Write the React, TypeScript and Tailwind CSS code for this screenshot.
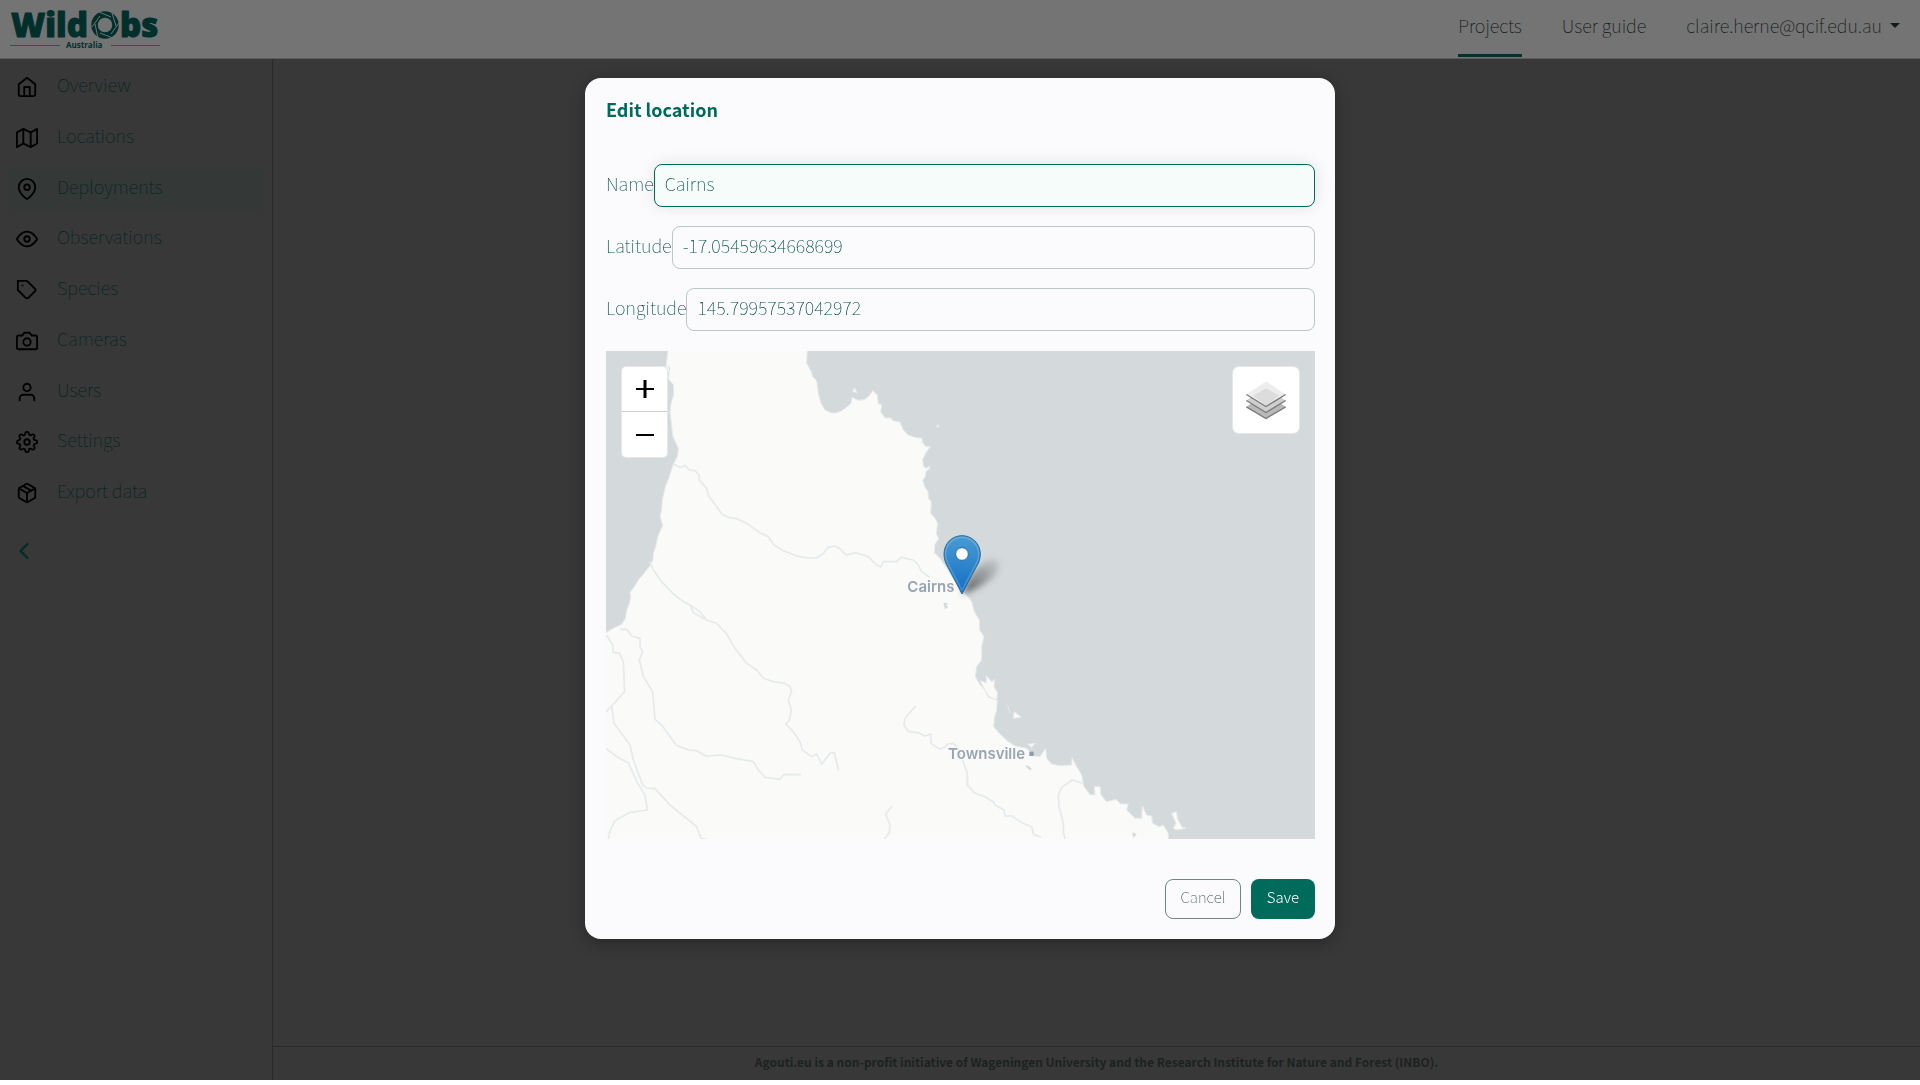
import type { ReactNode } from 'react';
import {
  FiHome, FiMap, FiMapPin, FiEye, FiTag, FiCamera, FiUser, FiSettings, FiPackage, FiChevronLeft,
} from 'react-icons/fi';

const navItems = [
  { label: 'Overview', icon: FiHome },
  { label: 'Locations', icon: FiMap },
  { label: 'Deployments', icon: FiMapPin, active: true },
  { label: 'Observations', icon: FiEye },
  { label: 'Species', icon: FiTag },
  { label: 'Cameras', icon: FiCamera },
  { label: 'Users', icon: FiUser },
  { label: 'Settings', icon: FiSettings },
  { label: 'Export data', icon: FiPackage },
];

function Logo() {
  return (
    <svg viewBox="0 -4 160 56" className="h-14 w-40" role="img" aria-label="WildObs Australia">
      <g fill="#002f2c" stroke="#002f2c" strokeWidth="1" strokeLinejoin="round" fontFamily="Open Sans, sans-serif" fontWeight="800" fontSize="33">
        <text x="3" y="32">Wild</text>
        <text x="112" y="32">bs</text>
      </g>
      <circle cx="97" cy="20" r="10.5" fill="none" stroke="#002f2c" strokeWidth="6.5" />
      <path
        d="M91 7 L103 12 M104 8 L108 21 M111 18 L103 29 M105 33 L92 28 M90 33 L87 19 M84 22 L92 11"
        stroke="#747474" strokeWidth="1" fill="none"
      />
      <path d="M2 40.5 H52 M103 40.5 H152" stroke="#2f5551" strokeWidth="1" />
      <text x="58" y="43" fill="#002f2c" fontFamily="Open Sans, sans-serif" fontWeight="700" fontSize="8">Australia</text>
    </svg>
  );
}

function Header() {
  return (
    <header className="flex h-[59px] items-center justify-between border-b border-[#5c5c5c] bg-[#747474] pl-2 pr-5">
      <a href="#home"><Logo /></a>
      <nav className="flex h-full gap-10 text-lg font-thin text-[#08130f]">
        <a href="#projects" className="flex h-[57px] items-center border-b-[3px] border-[#00332d] pb-1">Projects</a>
        <a href="#guide" className="flex h-[57px] items-center pb-[7px]">User guide</a>
        <button type="button" className="flex h-[57px] items-center gap-2 pb-[7px]">
          claire.herne@qcif.edu.au
          <svg viewBox="0 0 10 5" className="h-[5px] w-[10px]"><path d="M0 0h10L5 5z" fill="#121c19" /></svg>
        </button>
      </nav>
    </header>
  );
}

function Sidebar() {
  return (
    <aside className="w-[273px] shrink-0 border-r border-[#2a2a2a] px-[7px] pt-[6px]">
      <ul className="flex h-[450px] flex-col justify-between">
        {navItems.map(({ label, icon: Icon, active }) => (
          <li key={label}>
            <a
              href={`#${label}`}
              className={`flex h-11 items-center gap-[19px] rounded-xl pl-[9px] text-lg font-thin text-[#00241e] ${active ? 'bg-[#343837]' : ''}`}
            >
              <Icon size={22} className="text-black" />
              <span className="pb-[6px]">{label}</span>
            </a>
          </li>
        ))}
      </ul>
      <button type="button" aria-label="Collapse menu" className="mt-[22px] ml-[3px] block text-[#002d27]">
        <FiChevronLeft size={28} />
      </button>
    </aside>
  );
}

function CoastMap() {
  return (
    <svg viewBox="0 0 2127 1464" preserveAspectRatio="xMidYMid slice" className="block h-full w-full" role="img" aria-label="Map of the coast around Cairns">
      <defs>
        <linearGradient id="pin" x1="0" y1="0" x2="0" y2="1">
          <stop offset="0" stopColor="#4a9bd3" />
          <stop offset="1" stopColor="#126fc6" />
        </linearGradient>
        <linearGradient id="shade" x1="0" y1="1" x2="1" y2="0">
          <stop offset="0" stopColor="#333" stopOpacity="0.8" />
          <stop offset="1" stopColor="#555" stopOpacity="0.1" />
        </linearGradient>
        <filter id="soft" x="-40%" y="-40%" width="180%" height="180%"><feGaussianBlur stdDeviation="9" /></filter>
      </defs>
      <rect width="2127" height="1464" fill="#d4dadc" />
      <g fill="#fafaf8" stroke="#e6ebea" strokeWidth="3" strokeLinejoin="round">
        <path d="M186 -9L186 0L180 47L189 67L188 85L202 101L203 132L195 157L192 182L196 217L201 257L217 292L214 317L202 339L190 377L178 407L169 447L167 477L162 494L170 524L157 552L149 587L142 607L141 627L130 647L112 670L97 687L85 707L72 724L74 740L70 757L62 777L58 802L47 820L22 832L-9 850V1475H1687V1447L1672 1422L1660 1427L1640 1417L1637 1395L1622 1392L1609 1365L1607 1402L1587 1402L1562 1377L1567 1359L1544 1359L1530 1345L1502 1352L1485 1332L1482 1307L1465 1307L1467 1332L1452 1331L1434 1307L1427 1272L1412 1247L1398 1220L1397 1242L1362 1244L1337 1239L1322 1222L1319 1192L1302 1217L1284 1215L1262 1192L1227 1185L1207 1172L1182 1149L1163 1127L1165 1102L1172 1077L1174 1047L1147 1039L1137 1017L1119 997L1108 977L1112 947L1127 927L1127 887L1134 857L1120 835L1120 807L1105 782L1097 752L1084 734L1068 722L1022 652L1002 622L985 605L987 579L998 564L991 547L995 517L987 502L974 487L976 454L968 442L966 422L956 407L950 387L958 377L960 361L970 355L972 345L960 352L952 345L950 325L960 305L973 287L960 287L950 275L947 262L927 259L907 252L892 237L882 213L862 210L854 201L837 201L824 182L828 161L817 159L814 132L800 118L792 132L777 145L757 148L738 139L735 157Q702 190 677 186L657 177L645 157L637 127L632 89L620 77L616 62L602 37L604 -9Z" />
        <path d="M1122 989L1142 995L1140 973L1157 992L1167 985L1164 1007L1175 1025L1172 1047L1150 1037L1137 1017Z" />
        <path d="M1225 1082L1246 1099L1222 1102ZM1205 1062L1212 1087M1265 1180L1287 1177L1277 1189ZM745 110L754 125L740 122ZM993 223h5v5h-5z" />
        <path d="M1697 1387L1712 1382L1714 1402L1727 1427L1740 1432L1712 1437L1702 1432L1710 1417Z" />
      </g>
      <path d="M1012 755L1028 757L1020 762L1026 768L1017 775ZM1256 1243L1268 1245L1278 1255L1270 1257ZM1579 1444L1592 1450L1582 1460ZM186 40l6 12l-2 12z" fill="#d4dadc" />
      <g fill="none" stroke="#e5eaeb" strokeWidth="5" strokeLinejoin="round">
        <path transform="translate(-18 -33)" d="M220 372L240 382L256 377L268 390L285 392L298 405L296 418L320 445L326 468L350 500L366 523L385 532L410 536L440 550L480 578L505 590L522 615L550 632L590 648L625 654L650 654L670 640L685 622L705 618L722 628L738 645L765 638L805 650L822 668L842 682L850 665L890 665L903 652L940 660L955 675L965 695L990 712" />
        <g transform="translate(-18 717)">
          <path d="M150 -85L160 -60L185 -25L220 12L250 35L270 45L300 65L320 90L350 100L380 132L405 175L440 220L470 240L490 265L520 275L555 280L570 290L575 305L565 330L574 360L568 390L557 402L580 425L600 455L607 480L635 500L650 492L665 523L690 490L703 488L716 542" />
          <path d="M270 45L280 68L320 90M60 118L80 118L95 138L120 145L120 170L128 185L118 210L130 260L158 305L165 388L185 405L228 465L265 480L290 482L318 498L365 495L405 505L460 515L475 540L495 562L540 568L552 553L603 554" />
          <path d="M20 135L38 165L40 187L58 190L70 215L74 305L35 348L18 366M35 348L42 400L90 465L100 510L128 585L140 594L165 596L210 645L290 710L303 745L322 749" />
          <path d="M18 475L50 500L85 518L110 575L135 615L142 660L90 667L45 692L30 722L25 747M876 648L857 672L870 705L868 728L852 749" />
          <path d="M947 347L915 385L912 405L925 425L955 428L975 438L993 432L993 460L1020 478L1035 472L1042 462L1060 460L1075 475L1102 550L1102 588" />
        </g>
        <path transform="translate(822 447)" d="M262 830L262 855L285 880L315 890L340 905L345 915L372 930L375 948L395 948L425 968L455 980L460 1003L483 1012M610 850L577 840L545 862L535 885L537 920L550 970L550 1000L557 1019" />
      </g>
      <g fill="#98a5b4" stroke="#fafaf8" strokeWidth="6" paintOrder="stroke" fontFamily="Inter, sans-serif" fontWeight="600" fontSize="45">
        <text x="904" y="722">Cairns</text>
        <text x="1026" y="1224">Townsville</text>
      </g>
      <rect x="1270" y="1202" width="13" height="13" fill="#8d9bab" />
      <g transform="translate(822 447)">
        <path d="M248 282C262 240 290 192 328 180C362 172 366 200 345 224C322 250 285 270 248 282Z" fill="url(#shade)" filter="url(#soft)" />
        <path d="M246 107C216 107 192 131 192 162C192 178 197 190 204 202L246 282L288 202C296 190 301 178 301 162C301 131 276 107 246 107Z" fill="url(#pin)" stroke="#2e6c97" strokeWidth="3" />
        <path d="M246 112C219 112 197 134 197 162C197 178 202 188 208 199L246 271L284 199C291 188 296 178 296 162C296 134 273 112 246 112Z" fill="none" stroke="#fff" strokeOpacity="0.2" strokeWidth="4" />
        <circle cx="246" cy="162" r="19" fill="#fff" stroke="#2e6c97" strokeWidth="3" />
      </g>
    </svg>
  );
}

function LayersIcon() {
  return (
    <svg viewBox="0 0 120 116" className="h-[39px] w-10">
      <path d="M1 77L60 38L119 77L60 114Z" fill="#b9b9b9" />
      <path d="M1 77L60 112L119 77" fill="none" stroke="#7b7b7b" strokeWidth="4" />
      <path d="M1 58L60 20L119 58L60 95Z" fill="#cfcfcf" />
      <path d="M1 58L60 94L119 58" fill="none" stroke="#7b7b7b" strokeWidth="4" />
      <path d="M1 39L60 1L119 39L60 76Z" fill="#ededed" />
      <path d="M20 44L60 21L100 44L60 72Z" fill="#dcdcdc" />
      <path d="M1 40L60 76L119 40" fill="none" stroke="#7b7b7b" strokeWidth="4" />
    </svg>
  );
}

function Field({ id, label, value, focused }: { id: string; label: string; value: string; focused?: boolean }) {
  return (
    <div className="flex items-center text-[#005043]">
      <label htmlFor={id} className="pb-[6px]">{label}</label>
      <input
        id={id}
        defaultValue={value}
        className={`h-[43px] min-w-0 flex-1 rounded-lg border px-[10px] pb-[6px] outline-none ${
          focused ? 'border-[#006b5b] bg-[#f5fcfa] shadow-[0_0_16px_rgba(0,0,0,0.1)]' : 'border-[#b9c8c5] bg-transparent'
        }`}
      />
    </div>
  );
}

function ZoomButton({ label, children }: { label: string; children: ReactNode }) {
  return (
    <button type="button" aria-label={label} className="flex h-[45px] w-[45px] items-center justify-center border-b border-[#ccc] bg-white last:border-b-0">
      <svg viewBox="0 0 18 18" className="h-[18px] w-[18px]" stroke="#000">{children}</svg>
    </button>
  );
}

function EditLocationDialog() {
  return (
    <div className="fixed inset-0 flex items-start justify-center pt-[78px]">
      <div
        role="dialog"
        aria-labelledby="dialog-title"
        className="w-full max-w-[750px] rounded-2xl bg-[#fbfbfe] pb-5 pl-[21px] pr-5 pt-[17px] text-lg font-thin text-[#006b5b] shadow-[0_4px_16px_rgba(0,0,0,0.3)]"
      >
        <h2 id="dialog-title" className="h-[69px] font-bold">Edit location</h2>
        <form className="flex flex-col gap-[19px]">
          <Field id="name" label="Name" value="Cairns" focused />
          <Field id="latitude" label="Latitude" value="-17.05459634668699" />
          <Field id="longitude" label="Longitude" value="145.79957537042972" />
          <div className="relative mt-px h-[488px]">
            <CoastMap />
            <div className="absolute left-4 top-4 overflow-hidden rounded-sm ring-1 ring-[#e4e8e8]">
              <ZoomButton label="Zoom in"><path d="M0 9h18" strokeWidth="2" /><path d="M9 0v18" strokeWidth="3" /></ZoomButton>
              <ZoomButton label="Zoom out"><path d="M0 9h18" strokeWidth="2" /></ZoomButton>
            </div>
            <button type="button" aria-label="Layers" className="absolute right-4 top-4 flex h-[66px] w-[66px] items-center justify-center rounded-md bg-white ring-1 ring-[#e4e8e8]">
              <LayersIcon />
            </button>
          </div>
          <div className="mt-[21px] flex justify-end gap-[10px] text-[15px]">
            <button type="button" className="h-10 w-[76px] rounded-lg border border-[#6d8782] pb-1 text-[#3f5752]">Cancel</button>
            <button type="submit" className="h-10 w-16 rounded-lg bg-[#006b5b] pb-1 font-light text-white">Save</button>
          </div>
        </form>
      </div>
    </div>
  );
}

export default function App() {
  return (
    <div className="flex min-h-[calc(100vh-5px)] flex-col bg-[#383838] font-['Source_Sans_Pro','Noto_Sans_CJK_SC',sans-serif]">
      <Header />
      <div className="flex flex-1">
        <Sidebar />
        <div className="flex flex-1 flex-col">
          <main className="flex-1" />
          <footer className="h-[34px] border-t border-[#2a2a2a] pt-[7px] text-center text-xs font-bold text-[#1c2220]">
            Agouti.eu is a non-profit initiative of Wageningen University and the Research Institute for Nature and Forest (INBO).
          </footer>
        </div>
      </div>
      <EditLocationDialog />
    </div>
  );
}
